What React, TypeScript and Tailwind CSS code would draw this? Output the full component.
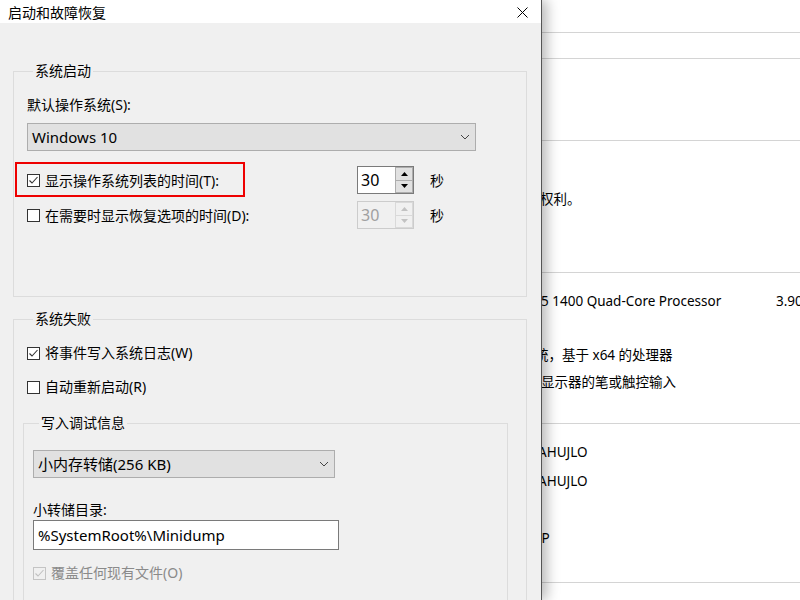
import { clsx as cn } from "clsx";

function CheckBox({ checked, disabled }: { checked?: boolean; disabled?: boolean }) {
  return (
    <span
      className={cn(
        "flex h-[13px] w-[13px] shrink-0 items-center justify-center border",
        disabled ? "border-[#c4c4c4] bg-[#f0f0f0]" : "border-[#333333] bg-white"
      )}
    >
      {checked && (
        <svg width="11" height="11" viewBox="0 0 11 11">
          <polyline
            points="1.5,5.5 4,8 9.5,2"
            fill="none"
            stroke={disabled ? "#c0c0c0" : "#333333"}
            strokeWidth="1.1"
          />
        </svg>
      )}
    </span>
  );
}

function Chevron() {
  return (
    <svg width="10" height="6" viewBox="0 0 10 6">
      <polyline points="1,1 5,5 9,1" fill="none" stroke="#444444" strokeWidth="1" />
    </svg>
  );
}

function Arrow({ up, disabled }: { up?: boolean; disabled?: boolean }) {
  return (
    <svg width="7" height="4" viewBox="0 0 7 4">
      <polygon points={up ? "0,4 7,4 3.5,0" : "0,0 7,0 3.5,4"} fill={disabled ? "#c2c2c2" : "#000000"} />
    </svg>
  );
}

function Spinner({ disabled }: { disabled?: boolean }) {
  return (
    <div className={cn("flex h-[28px] w-[57px] border", disabled ? "border-[#cccccc]" : "border-[#7a7a7a]")}>
      <div
        className={cn(
          "flex flex-1 items-center pl-[3px] text-[16px]",
          disabled ? "bg-[#f0f0f0] text-[#a0a0a0]" : "bg-white text-black"
        )}
      >
        30
      </div>
      <div className="flex w-[18px] flex-col">
        <div
          className={cn(
            "flex flex-1 items-center justify-center border",
            disabled ? "border-[#d9d9d9] bg-[#f0f0f0]" : "border-[#adadad] bg-[#e1e1e1]"
          )}
        >
          <Arrow up disabled={disabled} />
        </div>
        <div
          className={cn(
            "flex flex-1 items-center justify-center border border-t-0",
            disabled ? "border-[#d9d9d9] bg-[#f0f0f0]" : "border-[#adadad] bg-[#e1e1e1]"
          )}
        >
          <Arrow disabled={disabled} />
        </div>
      </div>
    </div>
  );
}

function Combo({ value, width }: { value: string; width: string }) {
  return (
    <div
      className={cn(
        "flex h-[28px] items-center justify-between border border-[#adadad] bg-[#e1e1e1] pl-[4px] pr-[5px] text-[15px]",
        width
      )}
    >
      <span>{value}</span>
      <Chevron />
    </div>
  );
}

function TimeRow({ label, checked, disabled }: { label: string; checked?: boolean; disabled?: boolean }) {
  return (
    <div className="flex h-[28px] items-center">
      <div className="flex w-[330px] items-center gap-[5px]">
        <CheckBox checked={checked} />
        <span>{label}</span>
      </div>
      <Spinner disabled={disabled} />
      <span className="ml-[16px]">秒</span>
    </div>
  );
}

function Dialog() {
  return (
    <div className="relative z-10 flex h-full w-[542px] shrink-0 flex-col border-r border-[#555555] shadow-[5px_0_12px_rgba(0,0,0,0.28)]">
      <div className="flex h-[31px] items-center justify-between bg-white pl-[8px] pr-[13px] pt-[2px]">
        <span className="text-[14px]">启动和故障恢复</span>
        <svg width="11" height="11" viewBox="0 0 11 11">
          <path d="M0.5 0.5 L10.5 10.5 M10.5 0.5 L0.5 10.5" stroke="#000000" strokeWidth="1" />
        </svg>
      </div>

      <div className="flex-1 bg-[#f0f0f0] pt-[38px] text-[14px]">
        <fieldset className="relative ml-[13px] h-[236px] w-[514px] border border-[#dcdcdc] pl-[13px]">
          <legend className="ml-[6px] px-[2px] leading-[20px]">系统启动</legend>
          <div className="mt-[14px] leading-[20px]">默认操作系统(S):</div>
          <div className="mt-[8px]">
            <Combo value="Windows 10" width="w-[449px]" />
          </div>
          <div className="relative mt-[15px] flex flex-col gap-[7px]">
            <TimeRow label="显示操作系统列表的时间(T):" checked />
            <TimeRow label="在需要时显示恢复选项的时间(D):" disabled />
            <div className="absolute left-[-12px] top-[-4px] h-[35px] w-[230px] border-2 border-[#ee0000]" />
          </div>
        </fieldset>

        <fieldset className="ml-[13px] mt-[12px] h-[320px] w-[514px] border border-[#dcdcdc] pl-[13px]">
          <legend className="ml-[6px] px-[2px] leading-[20px]">系统失败</legend>
          <div className="mt-[14px] flex items-center gap-[5px] leading-[20px]">
            <CheckBox checked />
            <span>将事件写入系统日志(W)</span>
          </div>
          <div className="mt-[14px] flex items-center gap-[5px] leading-[20px]">
            <CheckBox />
            <span>自动重新启动(R)</span>
          </div>
          <fieldset className="ml-[-4px] mt-[16px] h-[200px] w-[485px] border border-[#dcdcdc] pl-[9px]">
            <legend className="ml-[6px] px-[2px] leading-[20px]">写入调试信息</legend>
            <div className="mt-[17px]">
              <Combo value="小内存转储(256 KB)" width="w-[302px]" />
            </div>
            <div className="mt-[22px] leading-[20px]">小转储目录:</div>
            <div className="flex h-[30px] w-[306px] items-center border border-[#7a7a7a] bg-white pl-[4px] text-[15px]">
              %SystemRoot%\Minidump
            </div>
            <div className="mt-[13px] flex items-center gap-[5px] leading-[20px] text-[#8a8a8a]">
              <CheckBox checked disabled />
              <span>覆盖任何现有文件(O)</span>
            </div>
          </fieldset>
        </fieldset>
      </div>
    </div>
  );
}

function Backdrop() {
  return (
    <div className="flex h-full flex-1 flex-col overflow-hidden bg-white text-[13.5px] leading-[20px] text-black">
      <div className="h-[33px] shrink-0 border-b border-[#d4d4d4]" />
      <div className="h-[26px] shrink-0 border-b border-[#d4d4d4]" />
      <div className="h-[82px] shrink-0 border-b border-[#d4d4d4]" />
      <div className="flex h-[132px] shrink-0 flex-col border-b border-[#d4d4d4] pt-[48px]">
        <span className="ml-[-2px] whitespace-nowrap">权利。</span>
      </div>
      <div className="flex h-[151px] shrink-0 flex-col border-b border-[#d4d4d4] pt-[18px]">
        <div className="flex whitespace-nowrap">
          <span className="ml-[-1px] w-[235px] shrink-0">5 1400 Quad-Core Processor</span>
          <span className="shrink-0">3.90 GHz</span>
        </div>
        <span className="ml-[-7px] mt-[34px] whitespace-nowrap">统，基于 x64 的处理器</span>
        <span className="ml-[-1px] mt-[7px] whitespace-nowrap">显示器的笔或触控输入</span>
      </div>
      <div className="flex h-[159px] shrink-0 flex-col border-b border-[#d4d4d4] pt-[18px]">
        <span className="ml-[-4px] whitespace-nowrap">AHUJLO</span>
        <span className="ml-[-4px] mt-[9px] whitespace-nowrap">AHUJLO</span>
        <span className="ml-[-5px] mt-[37px] whitespace-nowrap">IP</span>
      </div>
    </div>
  );
}

export default function App() {
  return (
    <div className="flex h-[600px] w-[800px] overflow-hidden bg-white font-['Noto_Sans','Noto_Sans_CJK_SC',sans-serif] text-black">
      <Dialog />
      <Backdrop />
    </div>
  );
}
